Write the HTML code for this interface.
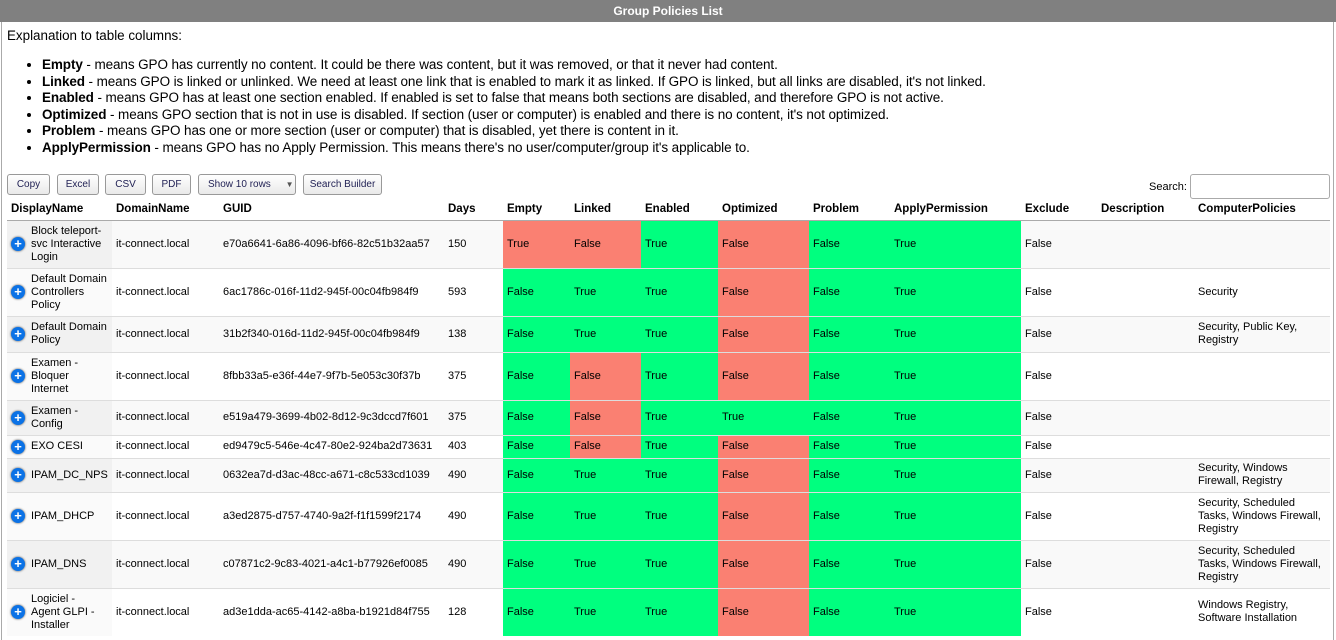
<!DOCTYPE html>
<html><head><meta charset="utf-8"><style>
*{box-sizing:border-box}
body{margin:0;width:1336px;height:636px;overflow:hidden;background:#fff;font-family:"Liberation Sans",Arial,sans-serif;color:#000}
.frame{position:absolute;left:1px;top:0;width:1333px;height:640px;border-left:1px solid #aaa;border-right:1px solid #aaa}
.bar{position:absolute;left:0;top:0;width:1336px;height:22px;background:#808080;color:#fff;font-weight:bold;font-size:12px;text-align:center;line-height:22px}
.expl{position:absolute;left:7px;top:28px;font-size:13.4px}
ul{position:absolute;left:28px;top:57px;margin:0;padding:0 0 0 14px;font-size:13.5px;line-height:16.6px;letter-spacing:-0.1px}
.btns{position:absolute;left:7px;top:174px}
.btn{position:absolute;top:0;height:21px;border:1px solid #999;border-radius:3px;background:linear-gradient(#fff,#e9e9e9);font-size:10px;color:#225;line-height:19px;text-align:center}
.search{position:absolute;left:1149px;top:181px;font-size:11px}
.sbox{position:absolute;left:1190px;top:174px;width:140px;height:25px;border:1px solid #aaa;border-radius:3px}
table{position:absolute;left:7px;top:199px;border-collapse:collapse;table-layout:fixed;font-size:11px}
th{text-align:left;font-weight:bold;height:21px;padding:0 4px;border-bottom:1px solid #aaa;font-size:11.5px;white-space:nowrap}
td{padding:0 4px;border-top:1px solid #ddd;line-height:13px}
tr.o td{background:#f9f9f9}
tr.o td.f{background:#f1f1f1}
tr.e td.f{background:#fafafa}
td.g,tr.o td.g{background:#00ff7f}
td.r,tr.o td.r{background:#fa8072}
.pl{flex:0 0 14px;display:inline-block;width:14px;height:14px;border-radius:50%;background:#0b72e6;color:#fff;font-weight:bold;text-align:center;line-height:14px;font-size:13px;margin-right:6px;box-shadow:0 0 2px #444}
.f div{display:flex;align-items:center}
.f div span+span{white-space:nowrap}
</style></head><body>
<div class="frame"></div>
<div class="bar">Group Policies List</div>
<div class="expl">Explanation to table columns:</div>
<ul>
<li><b>Empty</b> - means GPO has currently no content. It could be there was content, but it was removed, or that it never had content.</li>
<li><b>Linked</b> - means GPO is linked or unlinked. We need at least one link that is enabled to mark it as linked. If GPO is linked, but all links are disabled, it's not linked.</li>
<li><b>Enabled</b> - means GPO has at least one section enabled. If enabled is set to false that means both sections are disabled, and therefore GPO is not active.</li>
<li><b>Optimized</b> - means GPO section that is not in use is disabled. If section (user or computer) is enabled and there is no content, it's not optimized.</li>
<li><b>Problem</b> - means GPO has one or more section (user or computer) that is disabled, yet there is content in it.</li>
<li><b>ApplyPermission</b> - means GPO has no Apply Permission. This means there's no user/computer/group it's applicable to.</li>
</ul>
<div class="btns">
<div class="btn" style="left:0;width:43px">Copy</div>
<div class="btn" style="left:50px;width:42px">Excel</div>
<div class="btn" style="left:98px;width:41px">CSV</div>
<div class="btn" style="left:145px;width:39px">PDF</div>
<div class="btn" style="left:191px;width:98px;text-align:left;padding-left:9px">Show 10 rows <span style="margin-left:12px;color:#555;font-size:8px">▼</span></div>
<div class="btn" style="left:296px;width:79px">Search Builder</div>
</div>
<div class="search">Search:</div><div class="sbox"></div>
<table>
<colgroup><col style="width:105px"><col style="width:107px"><col style="width:225px"><col style="width:59px"><col style="width:67px"><col style="width:71px"><col style="width:77px"><col style="width:91px"><col style="width:81px"><col style="width:131px"><col style="width:76px"><col style="width:97px"><col style="width:136px"></colgroup>
<tr><th>DisplayName</th><th>DomainName</th><th>GUID</th><th>Days</th><th>Empty</th><th>Linked</th><th>Enabled</th><th>Optimized</th><th>Problem</th><th>ApplyPermission</th><th>Exclude</th><th>Description</th><th>ComputerPolicies</th></tr>
<tr class="o" style="height:48px"><td class="f"><div><span class="pl">+</span><span>Block teleport-<br>svc Interactive<br>Login</span></div></td><td>it-connect.local</td><td>e70a6641-6a86-4096-bf66-82c51b32aa57</td><td>150</td><td class="r">True</td><td class="r">False</td><td class="g">True</td><td class="r">False</td><td class="g">False</td><td class="g">True</td><td>False</td><td></td><td></td></tr>
<tr class="e" style="height:48px"><td class="f"><div><span class="pl">+</span><span>Default Domain<br>Controllers<br>Policy</span></div></td><td>it-connect.local</td><td>6ac1786c-016f-11d2-945f-00c04fb984f9</td><td>593</td><td class="g">False</td><td class="g">True</td><td class="g">True</td><td class="r">False</td><td class="g">False</td><td class="g">True</td><td>False</td><td></td><td>Security</td></tr>
<tr class="o" style="height:36px"><td class="f"><div><span class="pl">+</span><span>Default Domain<br>Policy</span></div></td><td>it-connect.local</td><td>31b2f340-016d-11d2-945f-00c04fb984f9</td><td>138</td><td class="g">False</td><td class="g">True</td><td class="g">True</td><td class="r">False</td><td class="g">False</td><td class="g">True</td><td>False</td><td></td><td>Security, Public Key,<br>Registry</td></tr>
<tr class="e" style="height:48px"><td class="f"><div><span class="pl">+</span><span>Examen -<br>Bloquer<br>Internet</span></div></td><td>it-connect.local</td><td>8fbb33a5-e36f-44e7-9f7b-5e053c30f37b</td><td>375</td><td class="g">False</td><td class="r">False</td><td class="g">True</td><td class="r">False</td><td class="g">False</td><td class="g">True</td><td>False</td><td></td><td></td></tr>
<tr class="o" style="height:35px"><td class="f"><div><span class="pl">+</span><span>Examen -<br>Config</span></div></td><td>it-connect.local</td><td>e519a479-3699-4b02-8d12-9c3dccd7f601</td><td>375</td><td class="g">False</td><td class="r">False</td><td class="g">True</td><td class="g">True</td><td class="g">False</td><td class="g">True</td><td>False</td><td></td><td></td></tr>
<tr class="e" style="height:23px"><td class="f"><div><span class="pl">+</span><span>EXO CESI</span></div></td><td>it-connect.local</td><td>ed9479c5-546e-4c47-80e2-924ba2d73631</td><td>403</td><td class="g">False</td><td class="r">False</td><td class="g">True</td><td class="r">False</td><td class="g">False</td><td class="g">True</td><td>False</td><td></td><td></td></tr>
<tr class="o" style="height:34px"><td class="f"><div><span class="pl">+</span><span>IPAM_DC_NPS</span></div></td><td>it-connect.local</td><td>0632ea7d-d3ac-48cc-a671-c8c533cd1039</td><td>490</td><td class="g">False</td><td class="g">True</td><td class="g">True</td><td class="r">False</td><td class="g">False</td><td class="g">True</td><td>False</td><td></td><td>Security, Windows<br>Firewall, Registry</td></tr>
<tr class="e" style="height:48px"><td class="f"><div><span class="pl">+</span><span>IPAM_DHCP</span></div></td><td>it-connect.local</td><td>a3ed2875-d757-4740-9a2f-f1f1599f2174</td><td>490</td><td class="g">False</td><td class="g">True</td><td class="g">True</td><td class="r">False</td><td class="g">False</td><td class="g">True</td><td>False</td><td></td><td>Security, Scheduled<br>Tasks, Windows Firewall,<br>Registry</td></tr>
<tr class="o" style="height:48px"><td class="f"><div><span class="pl">+</span><span>IPAM_DNS</span></div></td><td>it-connect.local</td><td>c07871c2-9c83-4021-a4c1-b77926ef0085</td><td>490</td><td class="g">False</td><td class="g">True</td><td class="g">True</td><td class="r">False</td><td class="g">False</td><td class="g">True</td><td>False</td><td></td><td>Security, Scheduled<br>Tasks, Windows Firewall,<br>Registry</td></tr>
<tr class="e" style="height:48px"><td class="f"><div><span class="pl">+</span><span>Logiciel -<br>Agent GLPI -<br>Installer</span></div></td><td>it-connect.local</td><td>ad3e1dda-ac65-4142-a8ba-b1921d84f755</td><td>128</td><td class="g">False</td><td class="g">True</td><td class="g">True</td><td class="r">False</td><td class="g">False</td><td class="g">True</td><td>False</td><td></td><td>Windows Registry,<br>Software Installation</td></tr>
</table>
</body></html>
